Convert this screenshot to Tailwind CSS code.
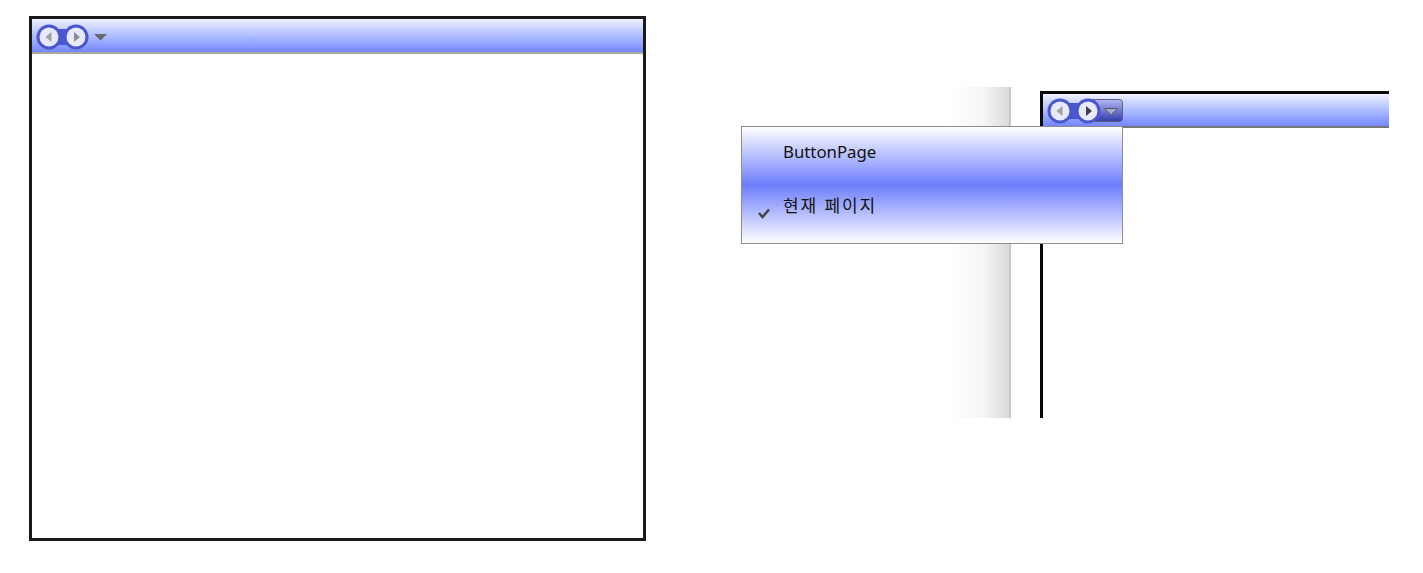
<!DOCTYPE html>
<html lang="en">

<head>
    <meta charset="UTF-8">
    <title>Navigation window</title>
    <script src="https://cdn.jsdelivr.net/npm/@tailwindcss/browser@4"></script>
</head>

<body class="bg-white w-[1423px] h-[573px] overflow-hidden relative font-['Noto_Sans','Noto_Sans_CJK_KR',sans-serif]">
    <!-- Left window -->
    <div class="absolute left-[29px] top-[16px] w-[617px] h-[525px] border-[3px] border-[#1a1a1a] bg-white flex flex-col">
        <div class="h-[35px] border-b-2 border-[#a8a8a8] bg-gradient-to-b from-[#f0f1ff] to-[#7686ff]">
            <svg width="80" height="33" viewBox="0 0 80 33">
                <rect x="17" y="10" width="27" height="16" fill="#4a57cc" />
                <circle cx="17" cy="18" r="12.500" fill="#4a57cc" />
                <circle cx="44" cy="18" r="12.500" fill="#4a57cc" />
                <circle cx="17" cy="18" r="9.500" fill="#e6e9ff" />
                <circle cx="44" cy="18" r="9.500" fill="#e6e9ff" />
                <path d="M19.500 13v10l-6-5z" fill="#a0a0a0" />
                <path d="M42 13v10l6-5z" fill="#8c8c8c" />
                <path d="M62 15h13l-6.500 6.500z" fill="#66666e" />
            </svg>
        </div>
    </div>

    <!-- Right scrap: grey gradient edge -->
    <div class="absolute left-[948px] top-[87px] w-[63px] h-[331px] border-r-2 border-[#c8c8c8] bg-gradient-to-r from-white via-[#f5f5f5] via-60% to-[#dadada]"></div>

    <!-- Right window, cut off at the bottom and right -->
    <div class="absolute left-[1040px] top-[91px] w-[349px] h-[327px] border-l-[3px] border-t-[3px] border-[#0a0a0a] bg-white flex flex-col">
        <div class="h-[34px] border-b-2 border-[#777] bg-gradient-to-b from-[#f0f1ff] to-[#7686ff]">
            <svg width="84" height="32" viewBox="0 0 84 32">
                <defs>
                    <linearGradient id="hotBox" x1="0" y1="0" x2="0" y2="1">
                        <stop offset="0" stop-color="#b4b8f2" />
                        <stop offset="1" stop-color="#333ba8" />
                    </linearGradient>
                </defs>
                <rect x="47.500" y="5.500" width="32" height="22" rx="3" fill="url(#hotBox)" stroke="#5a5e88" />
                <rect x="17" y="9" width="28" height="16" fill="#4a57cc" />
                <circle cx="17" cy="17" r="12.500" fill="#4a57cc" />
                <circle cx="45" cy="17" r="12.500" fill="#4a57cc" />
                <circle cx="17" cy="17" r="9.500" fill="#e6e9ff" />
                <circle cx="45" cy="17" r="9.500" fill="#e6e9ff" />
                <path d="M19.500 12v10l-6-5z" fill="#a0a0a0" />
                <path d="M43 12v10l6-5z" fill="#404040" />
                <path d="M61.500 14.500h13l-6.500 6.500z" fill="#a6a6d8" stroke="#5c5c70" />
            </svg>
        </div>
    </div>

    <!-- Dropdown menu -->
    <div class="absolute left-[741px] top-[126px] w-[382px] h-[118px] border border-[#8c8c8c] flex flex-col text-[#111] bg-[linear-gradient(to_bottom,#ffffff_0%,#6d7efb_50%,#ffffff_100%)]">
        <div class="h-[49px] pl-[41px] flex items-center text-[16.800px]">ButtonPage</div>
        <div class="h-[56px] pl-[15px] flex items-center">
            <svg class="mt-[17px]" width="14" height="12" viewBox="0 0 14 12">
                <path d="M2 6l3.500 4L12 2.500" fill="none" stroke="#444" stroke-width="2.500" />
            </svg>
            <span class="ml-[12px] mt-[3px] text-[17px] tracking-[1.900px]">현재 페이지</span>
        </div>
    </div>
</body>

</html>
